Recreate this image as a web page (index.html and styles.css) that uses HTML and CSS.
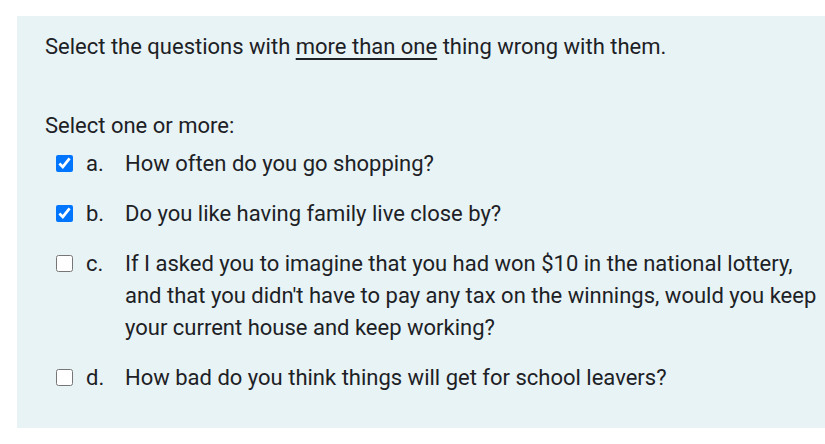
FILE: index.html
```html
<!DOCTYPE html>
<html>
<head>
<meta charset="utf-8">
<link rel="stylesheet" href="styles.css">
</head>
<body>
<div class="panel">
  <p class="qtext">Select the questions with <u>more than one</u> thing wrong with them.</p>
  <p class="prompt">Select one or more:</p>
  <div class="answers">
    <label class="answer">
      <input type="checkbox" checked>
      <span class="letter">a.</span>
      <span class="text">How often do you go shopping?</span>
    </label>
    <label class="answer">
      <input type="checkbox" checked>
      <span class="letter">b.</span>
      <span class="text">Do you like having family live close by?</span>
    </label>
    <label class="answer">
      <input type="checkbox">
      <span class="letter">c.</span>
      <span class="text">If I asked you to imagine that you had won $10 in the national lottery, and that you didn't have to pay any tax on the winnings, would you keep your current house and keep working?</span>
    </label>
    <label class="answer">
      <input type="checkbox">
      <span class="letter">d.</span>
      <span class="text">How bad do you think things will get for school leavers?</span>
    </label>
  </div>
</div>
</body>
</html>
```

FILE: styles.css
```css
html, body {
  margin: 0;
  padding: 0;
  background: #ffffff;
}
body {
  font-family: Roboto, "Liberation Sans", sans-serif;
  font-size: 22px;
  line-height: 32px;
  color: #1d2125;
}
.panel {
  margin: 16px 0 0 17px;
  background: #e7f3f5;
  padding: 15px 0 34px 28px;
}
.qtext {
  margin: 0;
}
.qtext u {
  text-decoration-thickness: 2px;
  text-underline-offset: 4px;
}
.prompt {
  margin: 47px 0 6px 0;
}
.answers {
  display: flex;
  flex-direction: column;
  gap: 18px;
}
.answer {
  display: grid;
  grid-template-columns: 17px 26px 1fr;
  column-gap: 13px;
  padding-left: 11px;
  align-items: start;
}
.answer input {
  width: 17px;
  height: 17px;
  margin: 7px 0 0 0;
}
.letter {
  display: block;
}
.text {
  display: block;
  padding-right: 8px;
}
```
